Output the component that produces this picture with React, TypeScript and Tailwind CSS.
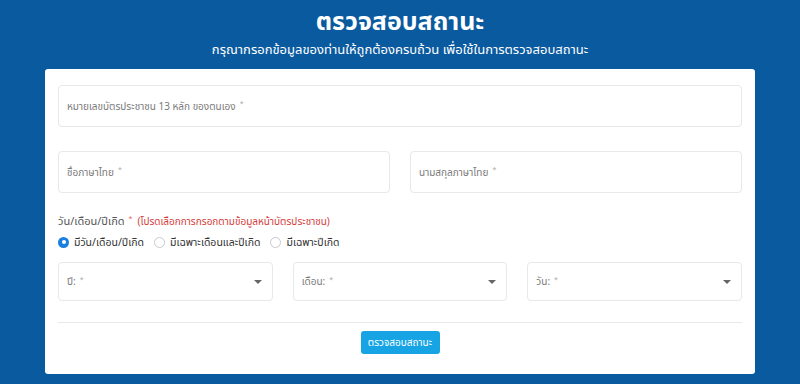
import * as React from "react";

const font = { fontFamily: '"Noto Sans", "Noto Sans Thai", "Liberation Sans", sans-serif' };

function Field({ label, className = "" }: { label: string; className?: string }) {
  return (
    <div
      className={`flex h-[42px] items-center rounded-[4px] border border-[#e6e8ea] bg-white px-[8px] text-[10px] text-[#7a7a7a] ${className}`}
    >
      <span>{label}</span>
      <span className="ml-[4px] text-[7px] text-[#aaa] -translate-y-[2px]">*</span>
    </div>
  );
}

function SelectField({ label }: { label: string }) {
  return (
    <div className="flex h-[39px] flex-1 items-center justify-between rounded-[4px] border border-[#e6e8ea] bg-white pl-[8px] pr-[10px] text-[10px] text-[#7a7a7a]">
      <div className="flex items-center">
        <span>{label}</span>
        <span className="ml-[4px] text-[7px] text-[#aaa] -translate-y-[2px]">*</span>
      </div>
      <svg width="8" height="4" viewBox="0 0 8 4" aria-hidden="true">
        <path d="M0 0h8L4 4z" fill="#666" />
      </svg>
    </div>
  );
}

function Radio({ label, checked }: { label: string; checked?: boolean }) {
  return (
    <label className="flex items-center gap-[5px]">
      {checked ? (
        <span className="grid size-[11px] place-items-center rounded-full bg-[#1a7fe0]">
          <span className="size-[4px] rounded-full bg-white" />
        </span>
      ) : (
        <span className="size-[11px] rounded-full border border-[#c9c9c9] bg-white" />
      )}
      <span>{label}</span>
    </label>
  );
}

export default function App() {
  return (
    <div className="h-[384px] w-[800px] overflow-hidden bg-[#0a5a9f]" style={font}>
      <div className="flex flex-col items-center pt-[2px] text-white">
        <h1 className="text-[25px] font-bold leading-[36px]">ตรวจสอบสถานะ</h1>
        <p className="mt-[1px] text-[13px] leading-[20px]">
          กรุณากรอกข้อมูลของท่านให้ถูกต้องครบถ้วน เพื่อใช้ในการตรวจสอบสถานะ
        </p>
      </div>
      <div className="mx-[45px] mt-[10px] h-[305px] rounded-[3px] bg-white px-[13px] pt-[16px]">
        <Field label="หมายเลขบัตรประชาชน 13 หลัก ของตนเอง" />
        <div className="mt-[24px] grid grid-cols-2 gap-[20px]">
          <Field label="ชื่อภาษาไทย" />
          <Field label="นามสกุลภาษาไทย" />
        </div>
        <div className="mt-[20px] flex items-center text-[11px] text-[#555]">
          <span>วัน/เดือน/ปีเกิด</span>
          <span className="ml-[4px] text-[7px] text-[#e06666] -translate-y-[2px]">*</span>
          <span className="ml-[5px] text-[10px] text-[#d33c3c]">(โปรดเลือกการกรอกตามข้อมูลหน้าบัตรประชาชน)</span>
        </div>
        <div className="mt-[5px] flex items-center gap-[10px] text-[10.5px] text-[#333]">
          <Radio label="มีวัน/เดือน/ปีเกิด" checked />
          <Radio label="มีเฉพาะเดือนและปีเกิด" />
          <Radio label="มีเฉพาะปีเกิด" />
        </div>
        <div className="mt-[12px] flex gap-[20px]">
          <SelectField label="ปี:" />
          <SelectField label="เดือน:" />
          <SelectField label="วัน:" />
        </div>
        <div className="mt-[21px] border-t border-[#e9e9e9]" />
        <div className="mt-[8px] flex justify-center">
          <button
            type="button"
            className="h-[23px] w-[79px] rounded-[3px] bg-[#16a4e4] text-[10px] text-white"
          >
            ตรวจสอบสถานะ
          </button>
        </div>
      </div>
    </div>
  );
}
